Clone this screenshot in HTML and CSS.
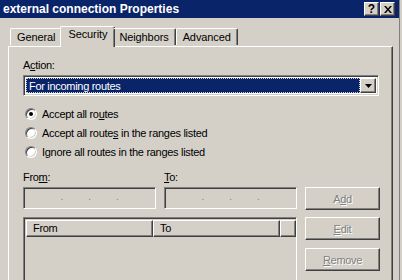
FILE: index.html
```html
<!DOCTYPE html>
<html lang="en">

<head>
  <meta charset="UTF-8">
  <title>external connection Properties</title>
  <link rel="stylesheet" href="styles.css">
</head>

<body>
  <div class="window">
    <div class="titlebar">
      <span class="title">external connection Properties</span>
      <div class="caption-buttons">
        <span class="cbtn">?</span>
        <span class="cbtn">
          <svg width="8" height="7" viewBox="0 0 8 7"><path d="M0 0h2l2 2.5L6 0h2L5 3.5 8 7H6L4 4.5 2 7H0l3-3.5z" fill="#000"/></svg>
        </span>
      </div>
    </div>

    <div class="client">
      <!-- tabs -->
      <div class="tabs">
        <div class="tab">General</div>
        <div class="tab active">Security</div>
        <div class="tab">Neighbors</div>
        <div class="tab">Advanced</div>
      </div>

      <div class="panel">
        <div class="label">A<u>c</u>tion:</div>
        <div class="combo">
          <div class="combo-value">For incoming routes</div>
          <div class="combo-btn">
            <svg width="7" height="4" viewBox="0 0 7 4"><path d="M0 0h7L3.5 4z" fill="#000"/></svg>
          </div>
        </div>

        <div class="radios">
          <div class="radio-row"><span class="radio checked"></span><span>Accept all ro<u>u</u>tes</span></div>
          <div class="radio-row"><span class="radio"></span><span>Accept all route<u>s</u> in the ranges listed</span></div>
          <div class="radio-row"><span class="radio"></span><span>I<u>g</u>nore all routes in the ranges listed</span></div>
        </div>

        <div class="range-labels">
          <div class="label from-label">Fro<u>m</u>:</div>
          <div class="label"><u>T</u>o:</div>
        </div>

        <div class="range">
          <div class="range-left">
            <div class="fields">
              <div class="ipfield"><span>.</span><span>.</span><span>.</span></div>
              <div class="ipfield"><span>.</span><span>.</span><span>.</span></div>
            </div>
            <div class="listview">
              <div class="lv-header">
                <div class="lv-col col-from">From</div>
                <div class="lv-col col-to">To</div>
                <div class="lv-col col-rest"></div>
              </div>
            </div>
          </div>
          <div class="buttons">
            <div class="btn">A<u>d</u>d</div>
            <div class="btn"><u>E</u>dit</div>
            <div class="btn btn-remove"><u>R</u>emove</div>
          </div>
        </div>
      </div>
    </div>
  </div>
</body>

</html>
```

FILE: styles.css
```css
* {
  margin: 0;
  padding: 0;
  box-sizing: border-box;
}

body {
  width: 402px;
  height: 280px;
  overflow: hidden;
  background: #d4d0c8;
  font-family: 'Liberation Sans', Arial, sans-serif;
  font-size: 11px;
  letter-spacing: -0.3px;
  color: #000;
}

.window {
  width: 400px;
  height: 280px;
  overflow: hidden;
  display: flex;
  flex-direction: column;
  border-right: 1px solid #808080;
  background: #d4d0c8;
}

/* title bar */
.titlebar {
  height: 18px;
  flex: none;
  background: #0a246a;
  display: flex;
  align-items: center;
  justify-content: space-between;
  padding: 0 4px 0 3px;
}

.title {
  color: #fff;
  font-weight: bold;
  font-size: 12px;
  letter-spacing: 0;
}

.caption-buttons {
  display: flex;
  gap: 1px;
}

.cbtn {
  width: 15px;
  height: 14px;
  display: flex;
  align-items: center;
  justify-content: center;
  background: #d4d0c8;
  font-weight: bold;
  font-size: 12px;
  letter-spacing: 0;
  border: 1px solid;
  border-color: #fff #404040 #404040 #fff;
  box-shadow: inset -1px -1px #808080;
}

/* tabs */
.client {
  flex: 1;
  min-height: 0;
  display: flex;
  flex-direction: column;
  padding: 8px 6px 0 8px;
}

.tabs {
  display: flex;
  align-items: flex-end;
  height: 20px;
  flex: none;
  padding-left: 2px;
  position: relative;
  z-index: 1;
}

.tab {
  height: 17px;
  padding: 2px 6px 0 6px;
  letter-spacing: -0.1px;
  border-top: 1px solid #fff;
  border-left: 1px solid #fff;
  border-right: 1px solid #404040;
  box-shadow: inset -1px 0 #808080;
  border-radius: 2px 2px 0 0;
  margin-bottom: 1px;
}

.tab.active {
  height: 21px;
  margin: 0 -2px -1px -2px;
  padding: 1px 7px 0 7px;
  background: #d4d0c8;
}

.tab.active + .tab {
  border-left: none;
}

.panel {
  flex: 1;
  min-height: 0;
  overflow: hidden;
  border-top: 1px solid #fff;
  border-left: 1px solid #fff;
  border-right: 1px solid #404040;
  box-shadow: inset -1px 0 #808080;
  padding: 12px 14px 0 14px;
}

.label {
  height: 14px;
  line-height: 13px;
}

/* combo box */
.combo {
  margin-top: 2px;
  width: 356px;
  height: 21px;
  display: flex;
  padding: 2px;
  border: 1px solid;
  border-color: #808080 #fff #fff #808080;
  box-shadow: inset 1px 1px #404040, inset -1px -1px #d4d0c8;
  background: #fff;
}

.combo-value {
  flex: 1;
  background: #0a246a;
  color: #fff;
  line-height: 15px;
  padding-left: 2px;
  border: 1px dotted #d4d0c8;
}

.combo-btn {
  width: 16px;
  display: flex;
  align-items: center;
  justify-content: center;
  background: #d4d0c8;
  border: 1px solid;
  border-color: #fff #404040 #404040 #fff;
  box-shadow: inset -1px -1px #808080;
}

/* radio buttons */
.radios {
  margin-top: 11px;
  display: flex;
  flex-direction: column;
  gap: 6px;
}

.radio-row {
  display: flex;
  align-items: center;
  height: 13px;
  gap: 5px;
  padding-left: 2px;
}

.radio {
  width: 12px;
  height: 12px;
  flex: none;
  border-radius: 50%;
  background: #fff;
  border: 1px solid;
  border-color: #808080 #fff #fff #808080;
  box-shadow: inset 1px 1px #404040, inset -1px -1px #d4d0c8;
  display: flex;
  align-items: center;
  justify-content: center;
}

.radio.checked::after {
  content: "";
  width: 4px;
  height: 4px;
  border-radius: 50%;
  background: #000;
}

/* address range */
.range-labels {
  margin-top: 13px;
  display: flex;
}

.from-label {
  width: 141px;
}

.range {
  display: flex;
  gap: 8px;
  margin-top: 2px;
}

.range-left {
  width: 274px;
}

.fields {
  display: flex;
  gap: 8px;
}

.ipfield {
  width: 133px;
  height: 22px;
  border: 1px solid;
  border-color: #808080 #fff #fff #808080;
  box-shadow: inset 1px 1px #404040, inset -1px -1px #d4d0c8;
  display: flex;
  justify-content: space-around;
  padding: 0 24px;
  color: #808080;
  font-size: 10px;
  line-height: 17px;
}

.listview {
  margin-top: 8px;
  height: 80px;
  border: 1px solid;
  border-color: #808080 #fff #fff #808080;
  box-shadow: inset 1px 1px #404040, inset -1px -1px #d4d0c8;
  padding: 2px 0 0 2px;
}

.lv-header {
  display: flex;
  height: 17px;
}

.lv-col {
  height: 17px;
  padding-left: 6px;
  line-height: 15px;
  border: 1px solid;
  border-color: #fff #404040 #404040 #fff;
  box-shadow: inset -1px -1px #808080;
}

.col-from {
  width: 127px;
}

.col-to {
  width: 127px;
}

.col-rest {
  width: 16px;
}

.buttons {
  display: flex;
  flex-direction: column;
  gap: 7px;
}

.btn {
  width: 75px;
  height: 23px;
  display: flex;
  align-items: center;
  justify-content: center;
  color: #808080;
  text-shadow: 1px 1px #fff;
  border: 1px solid;
  border-color: #fff #404040 #404040 #fff;
  box-shadow: inset -1px -1px #808080;
}

.btn-remove {
  margin-top: 1px;
}
```
